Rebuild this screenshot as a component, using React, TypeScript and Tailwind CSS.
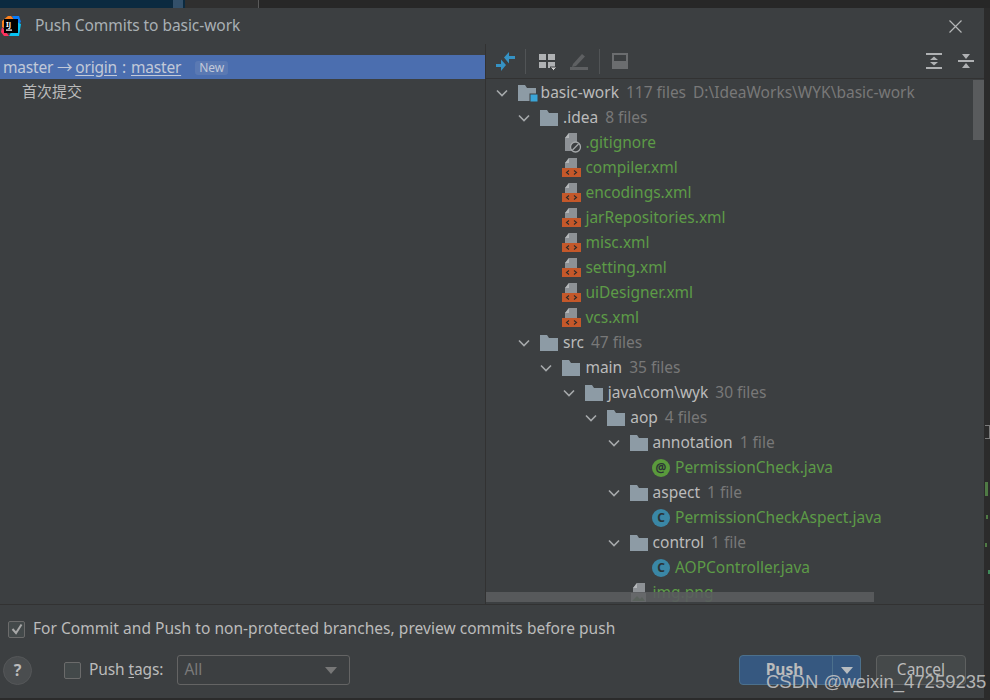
import { ReactNode } from 'react'

type Row = {
  level: number
  name: string
  count?: string
  path?: string
  kind: 'module' | 'folder' | 'ignore' | 'xml' | 'annotation' | 'class' | 'image'
}

const rows: Row[] = [
  { level: 0, name: 'basic-work', count: '117 files', path: 'D:\\IdeaWorks\\WYK\\basic-work', kind: 'module' },
  { level: 1, name: '.idea', count: '8 files', kind: 'folder' },
  { level: 2, name: '.gitignore', kind: 'ignore' },
  { level: 2, name: 'compiler.xml', kind: 'xml' },
  { level: 2, name: 'encodings.xml', kind: 'xml' },
  { level: 2, name: 'jarRepositories.xml', kind: 'xml' },
  { level: 2, name: 'misc.xml', kind: 'xml' },
  { level: 2, name: 'setting.xml', kind: 'xml' },
  { level: 2, name: 'uiDesigner.xml', kind: 'xml' },
  { level: 2, name: 'vcs.xml', kind: 'xml' },
  { level: 1, name: 'src', count: '47 files', kind: 'folder' },
  { level: 2, name: 'main', count: '35 files', kind: 'folder' },
  { level: 3, name: 'java\\com\\wyk', count: '30 files', kind: 'folder' },
  { level: 4, name: 'aop', count: '4 files', kind: 'folder' },
  { level: 5, name: 'annotation', count: '1 file', kind: 'folder' },
  { level: 6, name: 'PermissionCheck.java', kind: 'annotation' },
  { level: 5, name: 'aspect', count: '1 file', kind: 'folder' },
  { level: 6, name: 'PermissionCheckAspect.java', kind: 'class' },
  { level: 5, name: 'control', count: '1 file', kind: 'folder' },
  { level: 6, name: 'AOPController.java', kind: 'class' },
  { level: 5, name: 'img.png', kind: 'image' },
]

function Chevron() {
  return (
    <svg width="16" height="16" viewBox="0 0 16 16" fill="none" stroke="#a6a9ab" strokeWidth="1.6">
      <path d="M3 5.500 8 10.500 13 5.500" />
    </svg>
  )
}

function Folder({ module }: { module?: boolean }) {
  return (
    <svg width="20" height="18" viewBox="0 0 20 18">
      <path d="M0 1h7l2 3h9v13H0z" fill="#8d9ba5" />
      {module && <rect x="12" y="10" width="8" height="8" fill="#3aa5d8" stroke="#3c3f41" strokeWidth="1" />}
    </svg>
  )
}

function Doc({ children }: { children?: ReactNode }) {
  return (
    <svg width="20" height="20" viewBox="0 0 20 20">
      <path d="M3 5 7 0h8v18H3z" fill="#8d9195" />
      <path d="M3 5h4V0z" fill="#b4b7b9" />
      {children}
    </svg>
  )
}

function RowIcon({ kind }: { kind: Row['kind'] }) {
  if (kind === 'module') return <Folder module />
  if (kind === 'folder') return <Folder />
  if (kind === 'ignore')
    return (
      <Doc>
        <circle cx="13.500" cy="14" r="5" fill="#3c3f41" stroke="#a6a9ab" strokeWidth="1.300" />
        <path d="M10.500 17 16.500 11" stroke="#a6a9ab" strokeWidth="1.300" />
      </Doc>
    )
  if (kind === 'xml')
    return (
      <Doc>
        <rect x="0" y="10" width="19" height="9" fill="#c4582a" />
        <path d="M7 12.500 4.500 14.500 7 16.500M12 12.500 14.500 14.500 12 16.500" fill="none" stroke="#2b2b2b" strokeWidth="1.100" />
      </Doc>
    )
  if (kind === 'image')
    return (
      <Doc>
        <rect x="1" y="10" width="15" height="9" fill="#cfd3d6" />
        <path d="M2 18 7 13 10 16 12 14 15 18z" fill="#5d9b47" />
      </Doc>
    )
  const isClass = kind === 'class'
  return (
    <div
      className={
        isClass
          ? 'flex h-[18px] w-[18px] items-center justify-center rounded-full bg-[#3a87a6] text-[12px] font-bold leading-none text-[#2b3336]'
          : 'flex h-[18px] w-[18px] items-center justify-center rounded-full bg-[#5a9a3c] text-[12px] font-bold leading-none text-[#2b3336]'
      }
    >
      {isClass ? 'C' : '@'}
    </div>
  )
}

function TreeRow({ row }: { row: Row }) {
  const expandable = row.kind === 'module' || row.kind === 'folder'
  return (
    <div className="flex h-[25px] shrink-0 items-center whitespace-nowrap" style={{ paddingLeft: 7.6 + row.level * 22.4 }}>
      <div className="flex w-[24px] shrink-0 items-center">{expandable && <Chevron />}</div>
      <div className="flex w-[23px] shrink-0 items-center">
        <RowIcon kind={row.kind} />
      </div>
      <span className={expandable ? 'text-[#bbbbbb]' : 'text-[#5d9b47]'}>{row.name}</span>
      {row.count && <span className="ml-[7px] text-[#787878]">{row.count}</span>}
      {row.path && <span className="ml-[7px] text-[#787878]">{row.path}</span>}
    </div>
  )
}

function Toolbar() {
  return (
    <div className="flex h-[35px] shrink-0 items-center border-b border-[#323232] pl-[9px] pr-[10px]">
      <svg width="20" height="20" viewBox="0 0 20 20" fill="#3592c4">
        <path d="M9 6.500 14 1v4h6v3h-6v4.500z" />
        <path d="M11 14 6 8.500V13H1v3h5v4z" />
      </svg>
      <div className="ml-[10px] mr-[12px] h-[25px] w-px bg-[#515456]" />
      <svg width="20" height="20" viewBox="0 0 20 20" fill="#afb1b3">
        <rect x="1" y="3" width="7" height="6" />
        <rect x="10" y="3" width="7" height="6" />
        <rect x="1" y="11" width="7" height="6" />
        <rect x="10" y="11" width="7" height="6" />
        <path d="M12 16h7l-3.500 3.500z" fill="#d0d0d0" stroke="#3c3f41" />
      </svg>
      <svg className="ml-[11px]" width="20" height="20" viewBox="0 0 20 20" fill="#5e6062">
        <path d="M4 13 13 3l3 2.500-9 9.500-4 1z" />
        <rect x="1" y="16" width="18" height="3" />
      </svg>
      <div className="ml-[10px] mr-[12px] h-[25px] w-px bg-[#515456]" />
      <svg width="16" height="16" viewBox="0 0 16 16" fill="#6b6d6f">
        <path d="M0 0h16v16H0z" />
        <path d="M2 2h12v6H2z" fill="#3c3f41" />
      </svg>
      <div className="flex-1" />
      <svg width="16" height="18" viewBox="0 0 16 18" fill="#afb1b3">
        <rect x="0" y="1" width="16" height="2" />
        <rect x="0" y="15" width="16" height="2" />
        <path d="M8 4.500 12 8H4zM8 13.500 4 10h8z" />
      </svg>
      <svg className="ml-[16px]" width="16" height="18" viewBox="0 0 16 18" fill="#afb1b3">
        <rect x="0" y="8" width="16" height="2" />
        <path d="M8 7 4 2h8zM8 11l4 5H4z" />
      </svg>
    </div>
  )
}

function Checkbox({ checked }: { checked?: boolean }) {
  return (
    <div className="flex h-[17px] w-[17px] shrink-0 items-center justify-center rounded-[2px] border border-[#6b6b6b] bg-[#43494a]">
      {checked && (
        <svg width="14" height="14" viewBox="0 0 14 14" fill="none" stroke="#a7a7a7" strokeWidth="2">
          <path d="M2.500 7 6 11 11.500 2.500" />
        </svg>
      )}
    </div>
  )
}

export default function App() {
  return (
    <div
      className="relative flex h-[700px] w-[990px] flex-col overflow-hidden bg-[#2b2b2b] text-[15.5px] text-[#bbbbbb]"
      style={{ fontFamily: '"Noto Sans", "Noto Sans CJK SC", sans-serif' }}
    >
      <div className="flex h-[8px] shrink-0">
        <div className="w-[173px] bg-[#0b2a40]" />
        <div className="w-[10px] bg-[#33506a]" />
        <div className="w-[2px] bg-[#0b2a40]" />
        <div className="w-[73px] bg-[#2f2f2f]" />
        <div className="w-px bg-[#5a5a5a]" />
        <div className="flex-1 bg-[#272727]" />
      </div>

      <div className="flex h-[690px] w-[984px] shrink-0 flex-col bg-[#3c3f41]">
        <div className="relative flex-1 overflow-hidden">
          {/* title bar */}
          <div className="flex h-[36px] items-center">
            <svg className="ml-px shrink-0" width="20" height="20" viewBox="0 0 20 20">
              <path d="M1 5 7 0h3l3 3-8 10-4-2z" fill="#fc801d" />
              <path d="M1 11 8 20H3L0 16z" fill="#fe315d" />
              <path d="M11 0h7l2 6-4 3z" fill="#087cfa" />
              <path d="M16 6l4 2-2 12H8z" fill="#07c3f2" />
              <rect x="3" y="3" width="14" height="14" fill="#000000" />
              <text x="5" y="10.500" fontSize="7" fontWeight="700" fill="#ffffff">IJ</text>
              <rect x="5" y="13.500" width="6" height="1.200" fill="#ffffff" />
            </svg>
            <span className="ml-[14px] tracking-[-0.05px] text-[#a9b0b4]">Push Commits to basic-work</span>
            <div className="flex-1" />
            <svg className="mr-[22px]" width="13" height="13" viewBox="0 0 13 13" fill="none" stroke="#b4b6b7" strokeWidth="1.200">
              <path d="M.5.5l12 12M12.500.5l-12 12" />
            </svg>
          </div>

          <div className="flex h-[560px]">
            {/* commits */}
            <div className="w-[485px] shrink-0 pt-[11px]">
              <div className="flex h-[24px] items-center whitespace-nowrap bg-[#4b6eaf] pl-[3px] pt-px tracking-[-0.2px] text-[#c2c9d8]">
                <span>master → </span>
                <span className="ml-[3px] underline underline-offset-2">origin</span>
                <span className="mx-[5px]">:</span>
                <span className="underline underline-offset-2">master</span>
                <span className="ml-[14px] rounded-[3px] bg-[#5a79b3] px-[4px] text-[12px] leading-[14px] tracking-normal">New</span>
              </div>
              <div className="flex h-[25px] items-center pl-[22px] text-[15px]">首次提交</div>
            </div>

            {/* changed files */}
            <div className="relative flex-1 overflow-hidden border-l border-[#323232]">
              <Toolbar />
              <div className="flex h-[525px] flex-col overflow-hidden pt-px">
                {rows.map((row) => (
                  <TreeRow key={row.name} row={row} />
                ))}
              </div>
              <div className="absolute right-0 top-[36px] h-[60px] w-[11px] bg-[#595b5d]" />
              <div className="absolute bottom-[2px] left-0 h-[10px] w-[388px] bg-[#5a5c5e] opacity-90" />
            </div>
          </div>
        </div>

        {/* footer */}
        <div className="h-[94px] shrink-0 border-t border-[#323232]">
          <div className="mb-[2px] flex h-[48px] items-center pl-[8px]">
            <Checkbox checked />
            <span className="ml-[8px] whitespace-nowrap tracking-[0.04px]">
              For Commit and Push to non-protected branches, preview commits before push
            </span>
          </div>
          <div className="flex h-[30px] items-center">
            <div className="ml-[3px] flex h-[29px] w-[29px] items-center justify-center rounded-full border border-[#555759] bg-[#4a4d4f] text-[16px] font-bold text-[#bbbbbb]">
              ?
            </div>
            <div className="ml-[32px]">
              <Checkbox />
            </div>
            <span className="ml-[8px] whitespace-nowrap tracking-[-0.1px]">
              Push <span className="underline underline-offset-2">t</span>ags:
            </span>
            <div className="ml-[14px] flex h-[30px] w-[173px] items-center rounded-[3px] border border-[#646464] pl-[6px] pr-[12px] text-[#7a7a7a]">
              <span className="flex-1">All</span>
              <svg width="12" height="7" viewBox="0 0 12 7" fill="#777777">
                <path d="M0 0h12L6 7z" />
              </svg>
            </div>
            <div className="flex-1" />
            <div className="flex h-[30px] w-[122px] rounded-[4px] border border-[#4c708c] bg-[#365880] font-bold text-[#bbbbbb]">
              <div className="flex flex-1 items-center justify-center pr-[3px]">Push</div>
              <div className="flex w-[28px] items-center justify-center border-l border-[#4c708c]">
                <svg width="12" height="7" viewBox="0 0 12 7" fill="#b8bcc0">
                  <path d="M0 0h12L6 7z" />
                </svg>
              </div>
            </div>
            <div className="ml-[15px] mr-[18px] flex h-[30px] w-[90px] items-center justify-center rounded-[4px] border border-[#5e6060] bg-[#45494a]">
              Cancel
            </div>
          </div>
        </div>
      </div>

      {/* strip of the window behind the dialog */}
      <div className="absolute right-0 top-[8px] h-[692px] w-[6px] bg-[#2b2b2b]">
        <div className="absolute left-[1px] top-[417px] h-[14px] w-[5px] border-y border-r border-[#7a7a7a]" />
        <div className="absolute left-[1px] top-[474px] h-[14px] w-[3px] bg-[#4f7a45]" />
        <div className="absolute left-[2px] top-[507px] h-[4px] w-[2px] bg-[#4f7a45]" />
        <div className="absolute left-[1px] top-[535px] h-[4px] w-[2px] bg-[#4f7a45]" />
        <div className="absolute left-[4px] top-[562px] h-[4px] w-[2px] bg-[#3f8a5a]" />
      </div>

      {/* CSDN watermark */}
      <div
        className="absolute left-[766px] top-[670px] whitespace-nowrap text-[18.5px] leading-[24px] text-[#c9c9c9]/85"
        style={{ fontFamily: '"Liberation Sans", sans-serif' }}
      >
        CSDN @weixin_47259235
      </div>
    </div>
  )
}
